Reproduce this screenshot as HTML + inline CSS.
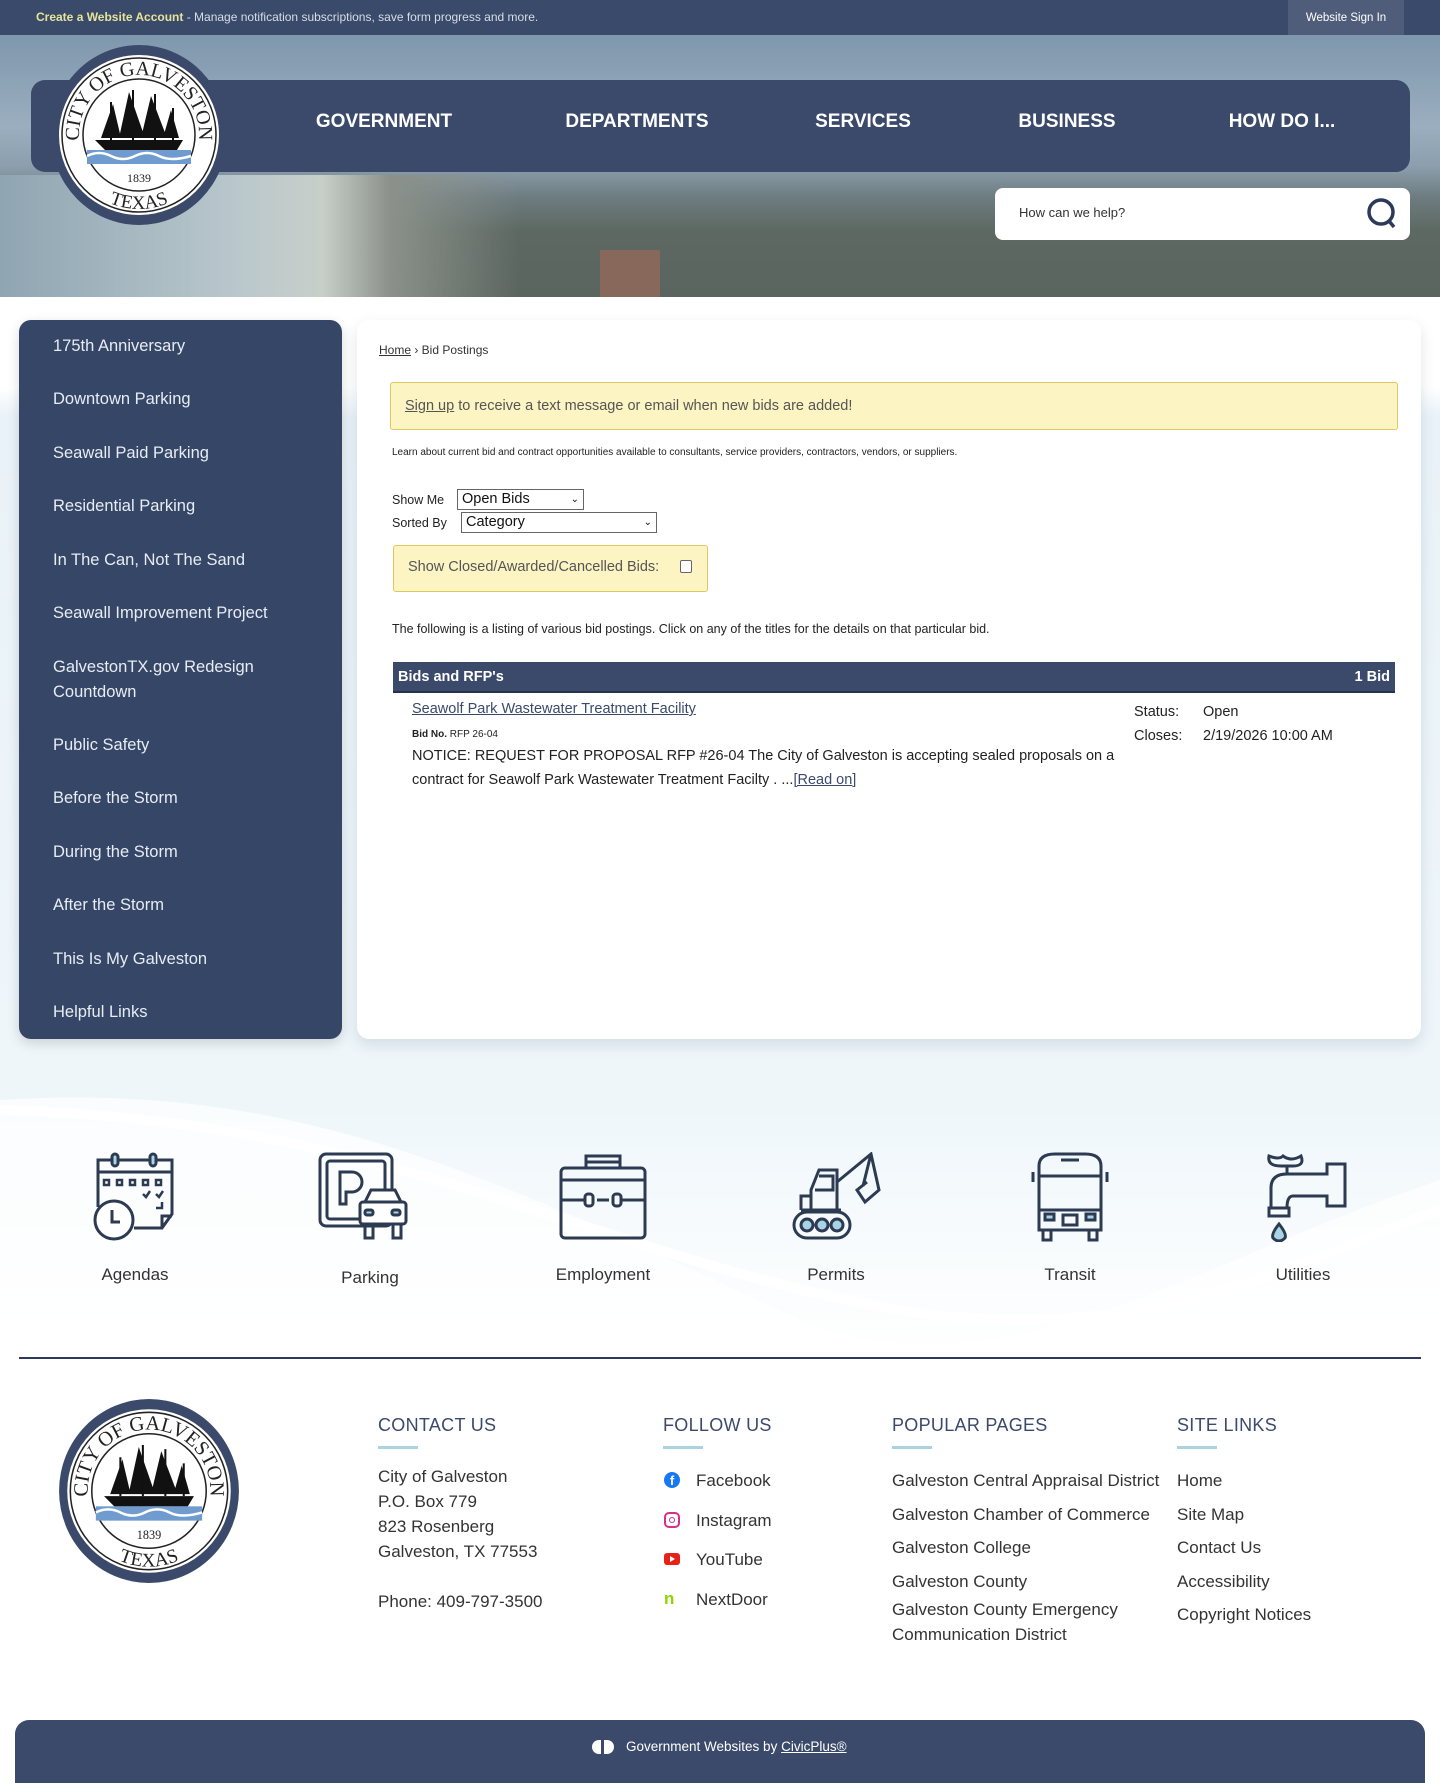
<!DOCTYPE html>
<html><head><meta charset="utf-8">
<style>
*{margin:0;padding:0;box-sizing:border-box}
body{width:1440px;height:1783px;position:relative;font-family:"Liberation Sans",Arial,sans-serif;background:#fff;overflow:hidden}
.a{position:absolute}
.topbar{left:0;top:0;width:1440px;height:35px;background:#3a4a6a}
.hero{left:0;top:35px;width:1440px;height:262px;background:linear-gradient(180deg,#7f97ad 0%,#9aaebf 35%,#8d9fae 50%,#6d7c80 62%,#5d6862 75%,#5b655f 100%)}
.nav{left:31px;top:80px;width:1379px;height:92px;background:#3b4a6b;border-radius:14px}
.nav span{position:absolute;top:31px;color:#fff;font-weight:bold;font-size:19px;transform:translateX(-50%);white-space:nowrap}
.side{left:19px;top:320px;width:323px;height:719px;background:#364667;border-radius:12px;box-shadow:0 4px 12px rgba(0,0,0,.15)}
.side div{position:absolute;left:34px;color:#e8ecf3;font-size:16.5px;line-height:25px}
.card{left:357px;top:320px;width:1064px;height:719px;background:#fff;border-radius:12px;box-shadow:0 6px 14px rgba(60,80,110,.15)}
.ic{position:absolute;top:1152px;width:90px;height:90px}
.lbl{position:absolute;top:1265px;font-size:17px;color:#333;transform:translateX(-50%)}
.fh{position:absolute;top:1415px;font-size:18px;color:#3b4a6b;letter-spacing:.3px}
.fu{position:absolute;top:1446px;width:40px;height:3px;background:#a9d4de}
.ft{position:absolute;font-size:17px;color:#333;line-height:25px}
</style></head><body>
<div class="a" style="left:0;top:297px;width:1440px;height:1060px;background:linear-gradient(180deg,#fff 0px,#fff 90px,#e9f2f8 120px,#eef6fa 800px,#fff 1060px)"></div>
<svg class="a" style="left:0;top:1060px" width="1440" height="300"><path d="M0 40 C300 20 500 120 800 260 C1000 340 1200 200 1440 120 L1440 300 L0 300Z" fill="#fff" opacity=".7"/><path d="M0 50 C400 60 600 200 900 250 C1150 290 1300 200 1440 150" stroke="#fff" stroke-width="10" fill="none" opacity=".9"/></svg>

<div class="a topbar"></div>
<div class="a" style="left:36px;top:10px;font-size:12px;color:#d8dde6;white-space:nowrap"><b style="color:#e6e39a">Create a Website Account</b> - Manage notification subscriptions, save form progress and more.</div>
<div class="a" style="left:1288px;top:0;width:116px;height:35px;background:#4f5d7a;color:#fff;font-size:11.5px;text-align:center;line-height:36px">Website Sign In</div>

<div class="a hero"></div>
<div class="a" style="left:0;top:175px;width:520px;height:122px;background:linear-gradient(90deg,#8fa5b2 0%,#b9c7cc 45%,#c8cfc9 62%,#8b918a 75%,rgba(91,101,95,0) 100%)"></div>
<div class="a" style="left:600px;top:250px;width:60px;height:47px;background:#9a6a58;opacity:.7"></div>
<div class="a nav">
<span style="left:353px">GOVERNMENT</span><span style="left:606px">DEPARTMENTS</span><span style="left:832px">SERVICES</span><span style="left:1036px">BUSINESS</span><span style="left:1251px">HOW DO I...</span>
</div>
<svg class="a" style="left:49px;top:44px" width="180" height="182" viewBox="0 0 180 182">
<ellipse cx="90" cy="91" rx="88" ry="90" fill="#3b4a6b"/>
<circle cx="90" cy="91" r="80" fill="#fff"/><circle cx="90" cy="91" r="77" fill="none" stroke="#222" stroke-width="1.5"/><circle cx="90" cy="91" r="56" fill="none" stroke="#222" stroke-width="1.5"/>
<defs><path id="tp1" d="M30 91 A60 60 0 0 1 150 91"/><path id="tp2" d="M16 91 A74 74 0 0 0 164 91"/></defs>
<text font-family="Liberation Serif,serif" font-size="20" fill="#222"><textPath href="#tp1" startOffset="50%" text-anchor="middle">CITY OF GALVESTON</textPath></text>
<text font-family="Liberation Serif,serif" font-size="19" fill="#222"><textPath href="#tp2" startOffset="50%" text-anchor="middle">TEXAS</textPath></text>
<path d="M46 96 L134 96 L128 106 L56 106Z" fill="#111"/>
<path d="M52 94 L64 60 L72 94Z M70 94 L80 48 L96 94Z M92 94 L102 52 L118 94Z M114 94 L122 66 L130 94Z" fill="#111"/>
<path d="M62 58 V96 M84 46 V96 M106 50 V96 M124 64 V96" stroke="#111" stroke-width="2"/>
<rect x="38" y="106" width="104" height="14" fill="#6f9bcf"/><path d="M38 112 Q50 106 62 112 T86 112 T110 112 T142 112" stroke="#fff" stroke-width="2.5" fill="none"/>
<text x="90" y="138" font-family="Liberation Serif,serif" font-size="12" text-anchor="middle" fill="#222">1839</text>
</svg>
<div class="a" style="left:995px;top:188px;width:415px;height:52px;background:#fff;border-radius:8px"></div>
<div class="a" style="left:1019px;top:205px;font-size:13px;color:#333">How can we help?</div>
<svg class="a" style="left:1366px;top:197px" width="32" height="32" viewBox="0 0 32 32"><circle cx="15" cy="15" r="12" stroke="#2c3a58" stroke-width="3.5" fill="none"/><path d="M23 24 L28 30" stroke="#2c3a58" stroke-width="3.5"/></svg>

<div class="a side">
<div style="top:14px">175th Anniversary</div><div style="top:67px">Downtown Parking</div><div style="top:121px">Seawall Paid Parking</div><div style="top:174px">Residential Parking</div><div style="top:228px">In The Can, Not The Sand</div><div style="top:281px">Seawall Improvement Project</div><div style="top:335px">GalvestonTX.gov Redesign<br>Countdown</div><div style="top:413px">Public Safety</div><div style="top:466px">Before the Storm</div><div style="top:520px">During the Storm</div><div style="top:573px">After the Storm</div><div style="top:627px">This Is My Galveston</div><div style="top:680px">Helpful Links</div>
</div>

<div class="a card"></div>
<div class="a" style="left:379px;top:343px;font-size:12px;color:#333"><u>Home</u> › Bid Postings</div>
<div class="a" style="left:390px;top:382px;width:1008px;height:48px;background:#fcf4c3;border:1.5px solid #e0c760;border-radius:3px"></div>
<div class="a" style="left:405px;top:398px;font-size:14.5px;color:#555"><u>Sign up</u> to receive a text message or email when new bids are added!</div>
<div class="a" style="left:392px;top:447px;font-size:10px;color:#222">Learn about current bid and contract opportunities available to consultants, service providers, contractors, vendors, or suppliers.</div>
<div class="a" style="left:392px;top:493px;font-size:12.5px;color:#222">Show Me</div>
<div class="a" style="left:457px;top:489px;width:127px;height:21px;border:1px solid #666;font-size:14.5px;padding-left:4px;line-height:19px;color:#111">Open Bids<span style="position:absolute;right:4px;font-size:10px">&#8964;</span></div>
<div class="a" style="left:392px;top:516px;font-size:12.5px;color:#222">Sorted By</div>
<div class="a" style="left:461px;top:512px;width:196px;height:21px;border:1px solid #666;font-size:14.5px;padding-left:4px;line-height:19px;color:#111">Category<span style="position:absolute;right:4px;font-size:10px">&#8964;</span></div>
<div class="a" style="left:393px;top:545px;width:315px;height:47px;background:#fcf4c3;border:1.5px solid #e0c760;border-radius:3px"></div>
<div class="a" style="left:408px;top:559px;font-size:14.5px;color:#555">Show Closed/Awarded/Cancelled Bids:</div>
<div class="a" style="left:680px;top:560px;width:12px;height:13px;border:1px solid #666;border-radius:2px;background:#fff"></div>
<div class="a" style="left:392px;top:622px;font-size:12.5px;color:#222">The following is a listing of various bid postings. Click on any of the titles for the details on that particular bid.</div>
<div class="a" style="left:393px;top:662px;width:1002px;height:31px;background:#3b4a6b;border-bottom:2px solid #25324c;color:#fff;font-weight:bold;font-size:14.5px;line-height:30px;padding:0 5px"><span>Bids and RFP's</span><span style="float:right">1 Bid</span></div>
<div class="a" style="left:412px;top:701px;font-size:14.5px;color:#3b4a6b"><u>Seawolf Park Wastewater Treatment Facility</u></div>
<div class="a" style="left:412px;top:729px;font-size:10px;color:#222"><b>Bid No.</b> RFP 26-04</div>
<div class="a" style="left:412px;top:745px;width:715px;font-size:14.5px;color:#222;line-height:23.5px">NOTICE: REQUEST FOR PROPOSAL RFP #26-04 The City of Galveston is accepting sealed proposals on a contract for Seawolf Park Wastewater Treatment Facilty . ...<u style="color:#3b4a6b">[Read on]</u></div>
<div class="a" style="left:1134px;top:701px;font-size:14.5px;color:#222;line-height:23.5px">Status:<br>Closes:</div>
<div class="a" style="left:1203px;top:701px;font-size:14.5px;color:#222;line-height:23.5px">Open<br>2/19/2026 10:00 AM</div>

<!-- icons -->
<svg class="ic" style="left:90px" viewBox="0 0 90 90" fill="none" stroke="#2c3a52" stroke-width="3"><path d="M8 55 V8 H82 V62 L72 76 H44"/><path d="M8 20 H82"/><rect x="22" y="2" width="6" height="12" rx="3" fill="#a9d4e4"/><rect x="60" y="2" width="6" height="12" rx="3" fill="#a9d4e4"/><path d="M28 8 H60"/><g stroke-width="2.5"><rect x="14" y="28" width="5" height="5"/><rect x="27" y="28" width="5" height="5"/><rect x="40" y="28" width="5" height="5"/><rect x="53" y="28" width="5" height="5"/><rect x="66" y="28" width="5" height="5"/><path d="M53 42l3 3 4-6M66 42l3 3 4-6M66 56h6v-6"/></g><circle cx="24" cy="68" r="19" fill="#fff"/><path d="M22 58 V70 H30"/><path d="M72 76 V64 H82"/></svg>
<svg class="ic" style="left:318px" viewBox="0 0 90 90" fill="none" stroke="#2c3a52" stroke-width="3"><rect x="2" y="2" width="72" height="72" rx="6"/><rect x="9" y="9" width="58" height="58" rx="3"/><path d="M22 52 V20 H34 A10 10 0 0 1 34 40 H28 V52 Z"/><path d="M47 50 L53 38 H77 L83 50 Z" fill="#fff"/><rect x="42" y="50" width="46" height="22" rx="3" fill="#fff"/><path d="M47 72 V86 H55 V72 M75 72 V86 H83 V72"/><rect x="47" y="58" width="8" height="5" rx="2" fill="#a9d4e4"/><rect x="74" y="58" width="8" height="5" rx="2" fill="#a9d4e4"/></svg>
<svg class="ic" style="left:558px" viewBox="0 0 90 90" fill="none" stroke="#2c3a52" stroke-width="3"><path d="M28 16 V4 H62 V16"/><path d="M28 10 H62"/><rect x="3" y="16" width="84" height="70" rx="4"/><path d="M3 28 H87"/><path d="M3 48 H27 M39 48 H51 M63 48 H87"/><rect x="27" y="42" width="8" height="12" rx="3"/><rect x="55" y="42" width="8" height="12" rx="3"/></svg>
<svg class="ic" style="left:791px" viewBox="0 0 90 90" fill="none" stroke="#2c3a52" stroke-width="3"><path d="M20 58 V38 L28 18 H46 V58"/><path d="M28 24 H42 V38 H24"/><path d="M10 58 V44 H20"/><path d="M46 30 L80 2 L88 38 L74 50 L66 38 L76 30 M80 2 L72 34"/><rect x="3" y="60" width="56" height="26" rx="13"/><circle cx="16" cy="73" r="6" fill="#a9d4e4"/><circle cx="31" cy="73" r="6" fill="#a9d4e4"/><circle cx="46" cy="73" r="6" fill="#a9d4e4"/><path d="M10 58 H50"/></svg>
<svg class="ic" style="left:1025px" viewBox="0 0 90 90" fill="none" stroke="#2c3a52" stroke-width="3"><path d="M14 78 V14 Q14 2 30 2 H60 Q76 2 76 14 V78 Z"/><path d="M36 8 H54"/><path d="M14 24 H76 M14 58 H76 M8 20 V30 M82 20 V30"/><rect x="20" y="62" width="9" height="6" fill="#a9d4e4"/><rect x="61" y="62" width="9" height="6" fill="#a9d4e4"/><rect x="38" y="63" width="14" height="10"/><path d="M18 78 V88 H26 V78 M64 78 V88 H72 V78"/></svg>
<svg class="ic" style="left:1257px" viewBox="0 0 90 90" fill="none" stroke="#2c3a52" stroke-width="3"><path d="M12 4 Q22 8 26 4 Q34 10 44 4 Q48 14 36 14 H24 Q10 14 12 4Z"/><path d="M30 14 V22"/><path d="M14 56 V36 Q14 22 30 22 H70 V12 H88 V54 H70 V44 H36 Q30 44 30 56 Z"/><path d="M12 56 H32 V64 H12Z"/><path d="M22 72 Q14 82 16 86 Q22 92 28 86 Q30 82 22 72Z" fill="#a9d4e4"/></svg>
<div class="lbl" style="left:135px">Agendas</div><div class="lbl" style="left:370px;top:1268px">Parking</div><div class="lbl" style="left:603px">Employment</div><div class="lbl" style="left:836px">Permits</div><div class="lbl" style="left:1070px">Transit</div><div class="lbl" style="left:1303px">Utilities</div>

<div class="a" style="left:19px;top:1357px;width:1402px;height:2px;background:#2c3a58"></div>

<svg class="a" style="left:57px;top:1398px" width="184" height="186" viewBox="0 0 180 182">
<ellipse cx="90" cy="91" rx="88" ry="90" fill="#3b4a6b"/>
<circle cx="90" cy="91" r="80" fill="#fff"/><circle cx="90" cy="91" r="77" fill="none" stroke="#222" stroke-width="1.5"/><circle cx="90" cy="91" r="56" fill="none" stroke="#222" stroke-width="1.5"/>
<defs><path id="tp3" d="M30 91 A60 60 0 0 1 150 91"/><path id="tp4" d="M16 91 A74 74 0 0 0 164 91"/></defs>
<text font-family="Liberation Serif,serif" font-size="20" fill="#222"><textPath href="#tp3" startOffset="50%" text-anchor="middle">CITY OF GALVESTON</textPath></text>
<text font-family="Liberation Serif,serif" font-size="19" fill="#222"><textPath href="#tp4" startOffset="50%" text-anchor="middle">TEXAS</textPath></text>
<path d="M46 96 L134 96 L128 106 L56 106Z" fill="#111"/>
<path d="M52 94 L64 60 L72 94Z M70 94 L80 48 L96 94Z M92 94 L102 52 L118 94Z M114 94 L122 66 L130 94Z" fill="#111"/>
<path d="M62 58 V96 M84 46 V96 M106 50 V96 M124 64 V96" stroke="#111" stroke-width="2"/>
<rect x="38" y="106" width="104" height="14" fill="#6f9bcf"/><path d="M38 112 Q50 106 62 112 T86 112 T110 112 T142 112" stroke="#fff" stroke-width="2.5" fill="none"/>
<text x="90" y="138" font-family="Liberation Serif,serif" font-size="12" text-anchor="middle" fill="#222">1839</text>
</svg>

<div class="fh" style="left:378px">CONTACT US</div><div class="fu" style="left:378px"></div>
<div class="fh" style="left:663px">FOLLOW US</div><div class="fu" style="left:663px"></div>
<div class="fh" style="left:892px">POPULAR PAGES</div><div class="fu" style="left:892px"></div>
<div class="fh" style="left:1177px">SITE LINKS</div><div class="fu" style="left:1177px"></div>
<div class="ft" style="left:378px;top:1464px">City of Galveston<br>P.O. Box 779<br>823 Rosenberg<br>Galveston, TX 77553</div>
<div class="ft" style="left:378px;top:1589px">Phone: 409-797-3500</div>
<div class="ft" style="left:696px;top:1468px">Facebook</div><div class="ft" style="left:696px;top:1508px">Instagram</div><div class="ft" style="left:696px;top:1547px">YouTube</div><div class="ft" style="left:696px;top:1587px">NextDoor</div>
<div class="a" style="left:664px;top:1472px;width:16px;height:16px;border-radius:50%;background:#1877f2;color:#fff;font-size:13px;font-weight:bold;text-align:center;line-height:18px">f</div>
<div class="a" style="left:664px;top:1512px;width:16px;height:16px;border-radius:5px;border:2px solid #d62f8a"></div><div class="a" style="left:669px;top:1517px;width:6px;height:6px;border-radius:50%;border:1.5px solid #d62f8a"></div>
<div class="a" style="left:664px;top:1553px;width:16px;height:12px;border-radius:3px;background:#e62117"></div><div class="a" style="left:670px;top:1556px;width:0;height:0;border-left:5px solid #fff;border-top:3px solid transparent;border-bottom:3px solid transparent"></div>
<div class="a" style="left:664px;top:1589px;font-size:17px;font-weight:bold;color:#8ed500">n</div>
<div class="ft" style="left:892px;top:1464px;line-height:33.5px">Galveston Central Appraisal District<br>Galveston Chamber of Commerce<br>Galveston College<br>Galveston County</div>
<div class="ft" style="left:892px;top:1597px">Galveston County Emergency<br>Communication District</div>
<div class="ft" style="left:1177px;top:1464px;line-height:33.5px">Home<br>Site Map<br>Contact Us<br>Accessibility<br>Copyright Notices</div>

<div class="a" style="left:15px;top:1720px;width:1410px;height:63px;background:#3b4a6b;border-radius:14px 14px 0 0"></div>
<div class="a" style="left:592px;top:1740px;width:22px;height:14px;background:#fff;border-radius:7px"></div><div class="a" style="left:601px;top:1740px;width:3px;height:18px;background:#3b4a6b"></div>
<div class="a" style="left:626px;top:1739px;font-size:13.5px;color:#fff">Government Websites by <u>CivicPlus®</u></div>
</body></html>
